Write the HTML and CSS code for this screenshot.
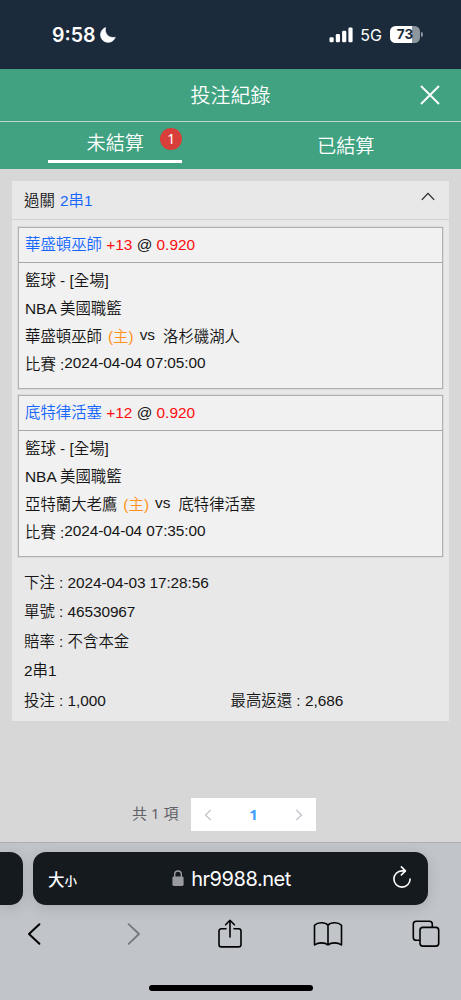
FILE: index.html
```html
<!DOCTYPE html>
<html lang="zh-Hant">
<head>
    <meta charset="UTF-8">
    <meta name="viewport" content="width=device-width, initial-scale=1.0">
    <title>投注紀錄</title>
    <link rel="stylesheet" href="styles.css">
</head>
<body>
    <div class="status-bar">
        <div class="clock">
            <span class="time">9:58</span>
            <svg class="moon" width="16" height="16" viewBox="0 0 16 16"><path d="M5.6 0.6 C4.2 6.4 8.6 11.6 15.3 10.3 A7.6 7.6 0 1 1 5.6 0.6Z" fill="#fff" stroke="#fff" stroke-width="0.6" stroke-linejoin="round"/></svg>
        </div>
        <div class="signal">
            <svg width="24" height="16" viewBox="0 0 24 16" fill="#fff">
                <rect x="0.5" y="10.2" width="4.2" height="5" rx="1.2"/>
                <rect x="6.8" y="7" width="4.2" height="8.2" rx="1.2"/>
                <rect x="13.1" y="3.8" width="4.2" height="11.4" rx="1.2"/>
                <rect x="19.4" y="0.6" width="4.2" height="14.6" rx="1.2"/>
            </svg>
            <span class="network">5G</span>
            <div class="battery"><span>73</span></div>
            <i class="battery-tip"></i>
        </div>
    </div>

    <header class="page-header">
        <h1>投注紀錄</h1>
        <svg class="close" width="20" height="20" viewBox="0 0 20 20"><path d="M1 1L19 19M19 1L1 19" stroke="#fff" stroke-width="1.9"/></svg>
    </header>

    <nav class="tabs">
        <div class="tab active">
            <div class="tab-inner">未結算<span class="badge">1</span></div>
        </div>
        <div class="tab">已結算</div>
    </nav>

    <main class="content">
        <section class="card">
            <div class="card-header">
                <span>過關 <span class="blue parlay">2串1</span></span>
                <svg width="14" height="9" viewBox="0 0 14 9"><path d="M0.8 7.8L7 1.3L13.2 7.8" fill="none" stroke="#222" stroke-width="1.2"/></svg>
            </div>

            <div class="bets">
                <div class="bet">
                    <div class="bet-title"><span class="blue">華盛頓巫師</span> <span class="red">+13</span> @ <span class="red">0.920</span></div>
                    <div class="bet-body">
                        <p>籃球 - [全場]</p>
                        <p>NBA 美國職籃</p>
                        <p class="match"><span>華盛頓巫師</span><span class="home">(主)</span><span class="vs">vs</span><span>洛杉磯湖人</span></p>
                        <p class="start"><span>比賽 :</span><span class="date">2024-04-04 07:05:00</span></p>
                    </div>
                </div>
                <div class="bet">
                    <div class="bet-title"><span class="blue">底特律活塞</span> <span class="red">+12</span> @ <span class="red">0.920</span></div>
                    <div class="bet-body">
                        <p>籃球 - [全場]</p>
                        <p>NBA 美國職籃</p>
                        <p class="match"><span>亞特蘭大老鷹</span><span class="home">(主)</span><span class="vs">vs</span><span>底特律活塞</span></p>
                        <p class="start"><span>比賽 :</span><span class="date">2024-04-04 07:35:00</span></p>
                    </div>
                </div>
            </div>

            <div class="summary">
                <p>下注 : <span class="number">2024-04-03 17:28:56</span></p>
                <p>單號 : <span class="number">46530967</span></p>
                <p>賠率 : 不含本金</p>
                <p>2串1</p>
                <div class="amounts">
                    <p>投注 : <span class="number">1,000</span></p>
                    <p>最高返還 : 2,686</p>
                </div>
            </div>
        </section>

        <div class="pagination">
            <span class="total">共 1 項</span>
            <div class="pager">
                <svg width="8" height="12" viewBox="0 0 8 12"><path d="M6.7 1L1.5 6L6.7 11" fill="none" stroke="#c0c4cc" stroke-width="1.3"/></svg>
                <span class="current">1</span>
                <svg width="8" height="12" viewBox="0 0 8 12"><path d="M1.3 1L6.5 6L1.3 11" fill="none" stroke="#c0c4cc" stroke-width="1.3"/></svg>
            </div>
        </div>
    </main>

    <footer class="browser-bar">
        <div class="address-row">
            <div class="prev-tab"></div>
            <div class="address">
                <div class="text-size"><span class="big">大</span><span class="small">小</span></div>
                <div class="url">
                    <svg width="12" height="17" viewBox="0 0 12 17"><rect x="0.4" y="6.6" width="11.2" height="9.4" rx="1.4" fill="#9a9aa3"/><path d="M2.7 7.5V4.3a3.3 3.3 0 0 1 6.6 0V7.5" fill="none" stroke="#9a9aa3" stroke-width="1.4"/></svg>
                    <span>hr9988.net</span>
                </div>
                <svg class="reload" width="20" height="22" viewBox="0 0 20 22" fill="none" stroke="#fff" stroke-width="1.6" stroke-linecap="round" stroke-linejoin="round"><path d="M13 4.9H10A8.1 8.1 0 1 0 18.1 13"/><path d="M9.4 0.9L13.4 4.9L9.4 8.9"/></svg>
            </div>
        </div>
        <div class="toolbar">
            <svg height="24" viewBox="0 0 14 24"><path d="M12.4 2.2L2 12L12.4 21.8" fill="none" stroke="#000" stroke-width="2" stroke-linecap="round" stroke-linejoin="round"/></svg>
            <svg class="forward" height="24" viewBox="0 0 14 24"><path d="M1.6 2.2L12 12L1.6 21.8" fill="none" stroke="#74777b" stroke-width="1.8" stroke-linecap="round" stroke-linejoin="round"/></svg>
            <svg height="32" viewBox="0 0 26 32" fill="none" stroke="#000" stroke-width="1.6" stroke-linecap="round" stroke-linejoin="round"><path d="M9 10.7H4.4a2.4 2.4 0 0 0-2.4 2.4V26.5a2.4 2.4 0 0 0 2.4 2.4H21.6A2.4 2.4 0 0 0 24 26.5V13.1a2.4 2.4 0 0 0-2.4-2.4H17"/><path d="M13 19V2.5M8.6 6.7L13 2.3L17.4 6.7"/></svg>
            <svg height="26" viewBox="0 0 30 26" fill="none" stroke="#000" stroke-width="1.6" stroke-linejoin="round"><path d="M15 4.2C12.5 1.2 5 .8 1.5 4.2V24C5 21.2 12 21.2 15 24C18 21.2 25 21.2 28.5 24V4.2C25 .8 17.5 1.2 15 4.2V24"/></svg>
            <svg height="28" viewBox="0 0 28 28" fill="none" stroke="#000" stroke-width="1.6"><path d="M7.7 20.3H4.2A2.9 2.9 0 0 1 1.3 17.4V4.2A2.9 2.9 0 0 1 4.2 1.3H17.4A2.9 2.9 0 0 1 20.3 4.2V7.2"/><rect x="8" y="7.4" width="18.7" height="18.7" rx="2.9"/></svg>
        </div>
        <div class="home-indicator"></div>
    </footer>
</body>
</html>
```
FILE: styles.css
```css
* {
    box-sizing: border-box;
}

body {
    margin: 0;
    width: 461px;
    height: 1000px;
    overflow: hidden;
    display: flex;
    flex-direction: column;
    background-color: #d7d7d7;
    color: #151515;
    font-family: 'Liberation Sans', 'Noto Sans CJK TC', sans-serif;
    font-size: 15.4px;
    font-weight: 350;
}

h1, p {
    margin: 0;
    font-weight: 350;
}

svg {
    display: block;
    flex-shrink: 0;
}

.blue {
    color: #1467ff;
}

.red {
    color: #ff0d0d;
}

/* status bar */
.status-bar {
    height: 69px;
    padding: 0 38px 0 52px;
    display: flex;
    justify-content: space-between;
    align-items: center;
    background-color: #1b2b3b;
    color: #fff;
    font-family: 'Inter', sans-serif;
}

.clock, .signal {
    display: flex;
    align-items: center;
}

.time {
    font-size: 19.5px;
    font-weight: 600;
}

.moon {
    margin-left: 5px;
}

.network {
    margin: 1px 8px 0 7px;
    font-size: 16px;
    font-weight: 400;
}

.battery {
    width: 30px;
    height: 17px;
    border-radius: 5.5px;
    background: linear-gradient(to right, #fff 73%, #8d959d 73%);
    color: #1b2b3b;
    font-size: 13.5px;
    font-weight: 700;
    line-height: 17px;
    text-align: center;
}

.battery-tip {
    width: 2px;
    height: 5px;
    margin-left: 1px;
    border-radius: 0 2px 2px 0;
    background-color: #8d959d;
}

/* page header */
.page-header {
    height: 53px;
    padding: 0 21px;
    display: grid;
    grid-template-columns: 20px 1fr 20px;
    align-items: center;
    background-color: #40a280;
    border-bottom: 1px solid #b9d8cb;
    color: #fff;
}

.page-header h1 {
    grid-column: 2;
    padding-top: 2px;
    font-size: 20px;
    line-height: 50px;
    text-align: center;
}

.close {
    margin-top: -1px;
}

.tabs {
    height: 47px;
    display: flex;
    background-color: #40a280;
    color: #fff;
    font-size: 19.2px;
}

.tab {
    width: 50%;
    display: flex;
    justify-content: center;
    line-height: 50px;
}

.tab-inner {
    position: relative;
    width: 134px;
    height: 41px;
    border-bottom: 3px solid #fff;
    line-height: 43px;
    text-align: center;
}

.badge {
    position: absolute;
    top: 6px;
    right: 0;
    width: 22px;
    height: 22px;
    border-radius: 50%;
    background-color: #d83e3a;
    font-size: 14px;
    font-family: 'Noto Sans', sans-serif;
    font-weight: 400;
    line-height: 21px;
}

/* bet card */
.content {
    height: 673px;
    padding: 12px 12px 0;
}

.card {
    height: 540px;
    background-color: #e8e8e8;
}

.card-header {
    height: 39px;
    padding: 0 14px 0 12px;
    display: flex;
    justify-content: space-between;
    border-bottom: 1px solid #d2d2d2;
    line-height: 39px;
}

.card-header svg {
    margin-top: 11px;
}

.parlay {
    margin-left: 1px;
}

.bets {
    padding: 7px 6px 6px;
    display: flex;
    flex-direction: column;
    gap: 6px;
}

.bet {
    height: 162px;
    border: 1px solid #b0b0b0;
    box-shadow: 0 0 0 0.5px #d0d0d0;
    background-color: #f1f1f1;
}

.bet-title {
    height: 35px;
    padding-left: 6px;
    border-bottom: 1px solid #a9a9a9;
    line-height: 33px;
}

.bet-body {
    padding: 4px 6px;
    line-height: 28px;
}

.match, .start {
    display: flex;
}

.home {
    margin: 0 6px;
    color: #ff9119;
}

.vs {
    margin-top: -2px;
    margin-right: 8px;
}

.date {
    margin-top: -2px;
    letter-spacing: -0.1px;
}

.number {
    letter-spacing: -0.1px;
}

.summary {
    padding: 5px 12px 0;
    line-height: 29.4px;
}

.amounts {
    display: grid;
    grid-template-columns: 1fr 1fr;
}

/* pagination */
.pagination {
    margin: 77px 0 0 120px;
    display: flex;
    align-items: center;
    font-family: 'Noto Sans', 'Noto Sans CJK TC', sans-serif;
}

.total {
    width: 59px;
    color: #606266;
    font-size: 15px;
    font-weight: 400;
    line-height: 31px;
    margin-top: -2px;
}

.pager {
    width: 125px;
    height: 33px;
    padding: 0 13px;
    display: flex;
    align-items: center;
    justify-content: space-between;
    background-color: #fff;
}

.current {
    color: #409eff;
    font-size: 15px;
    font-weight: 700;
    line-height: 30px;
    margin-top: -2px;
}

/* browser chrome */
.browser-bar {
    height: 158px;
    border-top: 1px solid #abafb3;
    background-color: #c1c5ca;
    overflow: hidden;
}

.address-row {
    padding-top: 9px;
    display: flex;
    gap: 10px;
}

.prev-tab {
    width: 23px;
    height: 53px;
    border-radius: 0 13px 13px 0;
    background-color: #151a1f;
    box-shadow: 0 3px 14px rgba(0, 0, 0, 0.13);
}

.address {
    width: 395px;
    height: 53px;
    padding: 0 16px 0 15px;
    display: flex;
    align-items: center;
    justify-content: space-between;
    border-radius: 13px;
    background-color: #151a1f;
    color: #fff;
    box-shadow: 0 3px 14px rgba(0, 0, 0, 0.13);
}

.text-size {
    width: 30px;
    display: flex;
    align-items: baseline;
    font-weight: 500;
}

.big {
    font-size: 16.5px;
}

.small {
    font-size: 12.5px;
}

.url {
    display: flex;
    align-items: center;
    gap: 7px;
    margin-right: 7px;
    font-family: 'Inter', sans-serif;
    font-size: 20px;
    font-weight: 400;
    letter-spacing: -0.45px;
}

.reload {
    margin-top: -3px;
}

.toolbar {
    height: 60px;
    padding: 0 20px 2px 19px;
    display: flex;
    align-items: center;
    justify-content: space-between;
}

.toolbar svg {
    width: 30px;
}

.toolbar .forward {
    margin: 0 -2px 0 2px;
}

.home-indicator {
    width: 164px;
    height: 6px;
    margin: 20px auto 0;
    border-radius: 3px;
    background-color: #000;
}
```
